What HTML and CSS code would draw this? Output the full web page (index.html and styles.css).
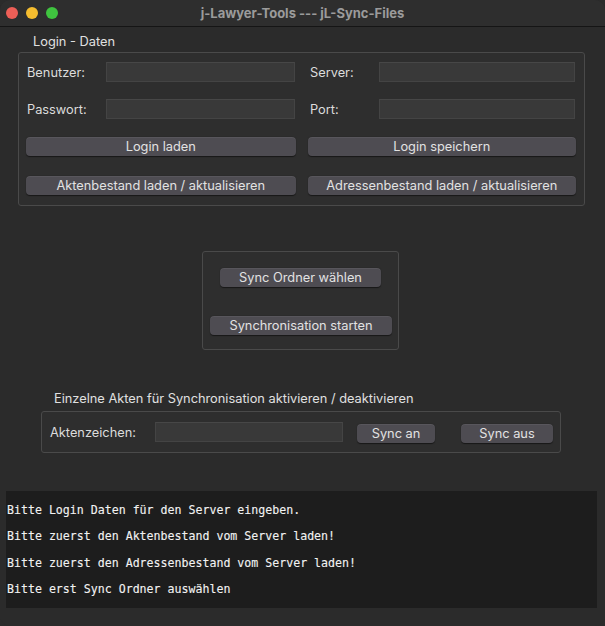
FILE: index.html
```html
<!DOCTYPE html>
<html lang="de">
<head>
<meta charset="utf-8">
<title>j-Lawyer-Tools --- jL-Sync-Files</title>
<link rel="stylesheet" href="styles.css">
</head>
<body>
<div class="window">
  <div class="titlebar">
    <div class="lights">
      <span class="light red"></span>
      <span class="light yellow"></span>
      <span class="light green"></span>
    </div>
    <div class="title">j-Lawyer-Tools --- jL-Sync-Files</div>
  </div>

  <div class="content">
    <div class="group-title login-title">Login - Daten</div>
    <div class="box login-box">
      <div class="field-row">
        <label class="lbl lbl-left">Benutzer:</label>
        <div class="input in-left"></div>
        <label class="lbl lbl-right">Server:</label>
        <div class="input in-right"></div>
      </div>
      <div class="field-row row2">
        <label class="lbl lbl-left">Passwort:</label>
        <div class="input in-left"></div>
        <label class="lbl lbl-right">Port:</label>
        <div class="input in-right"></div>
      </div>
      <div class="btn-row row3">
        <button class="btn btn-l">Login laden</button>
        <button class="btn btn-r">Login speichern</button>
      </div>
      <div class="btn-row row4">
        <button class="btn btn-l">Aktenbestand laden / aktualisieren</button>
        <button class="btn btn-r">Adressenbestand laden / aktualisieren</button>
      </div>
    </div>

    <div class="box sync-box">
      <button class="btn btn-order">Sync Ordner wählen</button>
      <button class="btn btn-start">Synchronisation starten</button>
    </div>

    <div class="group-title akten-title">Einzelne Akten für Synchronisation aktivieren / deaktivieren</div>
    <div class="box akten-box">
      <label class="lbl lbl-akten">Aktenzeichen:</label>
      <div class="input in-akten"></div>
      <button class="btn btn-an">Sync an</button>
      <button class="btn btn-aus">Sync aus</button>
    </div>

    <div class="console">
      <div class="line">Bitte Login Daten für den Server eingeben.</div>
      <div class="line">Bitte zuerst den Aktenbestand vom Server laden!</div>
      <div class="line">Bitte zuerst den Adressenbestand vom Server laden!</div>
      <div class="line">Bitte erst Sync Ordner auswählen</div>
    </div>
  </div>
</div>
</body>
</html>
```

FILE: styles.css
```css
* { box-sizing: border-box; }

html, body {
  margin: 0;
  padding: 0;
  background: #2b2b2b;
}

body {
  font-family: Inter, "Liberation Sans", Arial, sans-serif;
  font-size: 12.8px;
  color: #dcdcdc;
}

.window {
  width: 605px;
  height: 626px;
  background: #2b2b2b;
  border-radius: 10px;
  overflow: hidden;
  display: flex;
  flex-direction: column;
}

.titlebar {
  position: relative;
  height: 27px;
  flex: none;
  background: #2e2e2e;
  border-bottom: 1px solid #151515;
  display: flex;
  align-items: center;
  justify-content: center;
}

.lights {
  position: absolute;
  left: 6px;
  top: 7px;
  display: flex;
  gap: 8px;
}

.light {
  width: 12px;
  height: 12px;
  border-radius: 50%;
  display: block;
}
.red { background: #ed5f57; }
.yellow { background: #f5bd2f; }
.green { background: #3fc43f; }

.title {
  font-weight: bold;
  font-size: 13px;
  color: #9b9b9b;
  margin-top: -1px;
}

.content {
  flex: 1;
  display: flex;
  flex-direction: column;
  padding: 0 8px 0 6px;
}

.group-title {
  font-size: 12.8px;
  color: #e0e0e0;
  line-height: 16px;
}

.login-title {
  margin: 7px 0 0 27px;
}

.box {
  border: 1px solid #4a4a4a;
  border-radius: 3px;
  background: #2e2e2e;
}

.login-box {
  margin: 2px 0 0 12px;
  width: 567px;
  height: 154px;
  padding: 9px 8px 0 7px;
}

.field-row {
  display: flex;
  align-items: center;
  height: 20px;
}
.row2 { margin-top: 17px; }

.lbl {
  color: #dcdcdc;
  font-size: 12.8px;
}

.lbl-left { width: 80px; padding-left: 1px; }
.lbl-right { width: 69px; margin-left: 15px; }

.input {
  height: 20px;
  background: #393939;
  border: 1px solid #444444;
  border-top-color: #474747;
}
.in-left { width: 189px; }
.in-right { width: 196px; }

.btn-row {
  display: flex;
  gap: 12px;
}
.row3 { margin-top: 18px; }
.row4 { margin-top: 20px; }

.btn {
  font-family: Inter, "Liberation Sans", Arial, sans-serif;
  font-size: 12.8px;
  color: #e2e2e2;
  background: #4e4c52;
  border: none;
  border-radius: 4px;
  box-shadow: 0 0.5px 1px rgba(0,0,0,0.5), inset 0 1px 0 rgba(255,255,255,0.06);
  height: 19px;
  padding: 0;
  line-height: 19px;
  text-align: center;
}
.btn-l { width: 270px; }
.btn-r { width: 269px; }

.sync-box {
  margin: 45px 0 0 196px;
  width: 197px;
  height: 99px;
  display: flex;
  flex-direction: column;
  align-items: flex-start;
}
.btn-order {
  width: 161px;
  margin: 16px 0 0 17px;
}
.btn-start {
  width: 182px;
  margin: 29px 0 0 7px;
}

.akten-title {
  margin: 41px 0 0 48px;
}

.akten-box {
  margin: 4px 0 0 35px;
  width: 520px;
  height: 42px;
  display: flex;
  align-items: center;
  padding-left: 8px;
}
.lbl-akten { width: 105px; }
.in-akten { width: 188px; margin-top: -1px; }
.btn-an { width: 78px; margin-left: 14px; margin-top: 3px; }
.btn-aus { width: 92px; margin-left: 26px; margin-top: 3px; }

.console {
  margin: 38px 0 0 0;
  width: 591px;
  height: 117px;
  background: #1d1d1d;
  padding: 11px 0 0 1px;
  font-family: "DejaVu Sans Mono", monospace;
  font-size: 11.6px;
  color: #f2f2f2;
  -webkit-text-stroke: 0.12px #f2f2f2;
}
.line {
  height: 26.3px;
  line-height: 16px;
  white-space: pre;
}
```
